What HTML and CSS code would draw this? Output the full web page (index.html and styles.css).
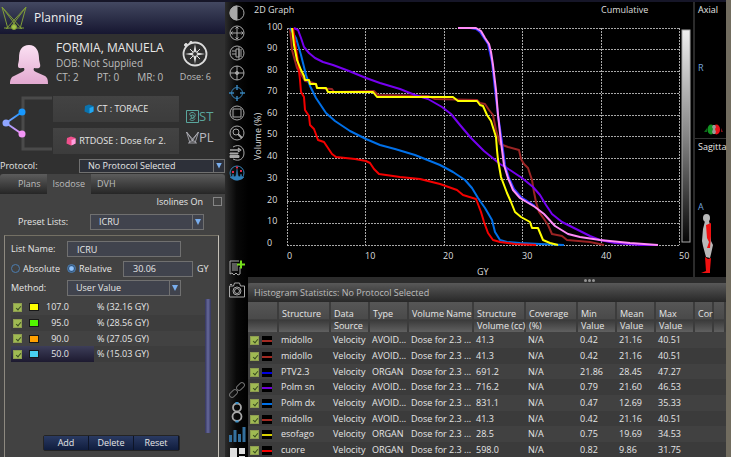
FILE: index.html
```html
<!DOCTYPE html>
<html lang="en">
<head>
<meta charset="utf-8">
<title>Planning</title>
<link rel="stylesheet" href="styles.css">
</head>
<body>
<div class="app">
  <aside class="sidebar">
    <header class="title">
      <svg class="logo" width="28" height="26" viewBox="0 0 28 26" fill="none" stroke="#7f9c38" stroke-width="1"><path d="M2 2 22 24M2 2 8 24M2 2 17 22M26 2 6 24M26 2 20 24M26 2 11 22M4 23h20"/><circle cx="14" cy="22" r="2.500" fill="#a4c44a"/></svg>
      <h1>Planning</h1>
    </header>
    <section class="patient">
      <svg class="avatar" width="40" height="41" viewBox="0 0 40 41"><defs><linearGradient id="skin" x1="0" y1="0" x2="0" y2="1"><stop offset="0" stop-color="#fbe0f3"/><stop offset="1" stop-color="#e2a9d0"/></linearGradient></defs><path fill="url(#skin)" d="M20 1C27 1 30 7 30 14c0 4 2 7 1 9-1 2-4 1-6 1-1 2 0 3 2 4l9 4c3 2 3 5 3 8H1c0-4 1-7 4-8l8-4c2-1 3-2 2-4-3 0-6 1-6-2 0-3 1-4 1-8C10 6 13 1 20 1Z"/></svg>
      <div class="details">
        <h2>FORMIA, MANUELA</h2>
        <p>DOB: Not Supplied</p>
        <p class="counts"><span>CT: 2</span><span>PT: 0</span><span>MR: 0</span></p>
      </div>
      <div class="dose">
        <svg width="28" height="28" viewBox="0 0 28 28" fill="none" stroke="#dcdcdc"><circle cx="14" cy="14" r="11.500" stroke-width="1.800"/><path stroke="none" fill="#e4e4e4" d="m14 4 1.600 8.400L24 14l-8.400 1.600L14 24l-1.600-8.400L4 14l8.400-1.600Z"/><path d="m9 9 10 10M19 9 9 19"/><circle cx="14" cy="14" r="2.500" fill="#333"/><circle cx="5" cy="5" r="1.500" fill="#dcdcdc"/><circle cx="10" cy="2.500" r="1.200" fill="#dcdcdc"/></svg>
        <span>Dose: 6</span>
      </div>
    </section>
    <section class="volumes">
      <svg width="53" height="60" viewBox="0 0 53 60" fill="none"><defs><linearGradient id="up" x1="0" y1="1" x2="1" y2="0"><stop stop-color="#8fa5ff"/><stop offset="1" stop-color="#1195ff"/></linearGradient><linearGradient id="down" x1="0" y1="0" x2="1" y2="1"><stop stop-color="#8fa5ff"/><stop offset="1" stop-color="#f08cf4"/></linearGradient></defs><path d="M52 3H23v51h29" stroke="#4a4a4a" stroke-width="3"/><path d="M6 28 22 17" stroke="url(#up)" stroke-width="2"/><path d="m6 28 16 11" stroke="url(#down)" stroke-width="2"/><circle cx="6" cy="28" r="3.500" fill="#8fa5ff"/><circle cx="22" cy="17" r="3.500" fill="#1798ff"/><circle cx="22" cy="39" r="3.500" fill="#f395f7"/></svg>
      <div class="volume-buttons">
        <button type="button"><svg width="10" height="10" viewBox="0 0 10 10"><path fill="#0a72ad" d="m1 2 4-1.500L9.500 2v5.500L5 9.500.5 7.500Z"/><path fill="#22a7f2" d="m5.500 4 4-1.500v5l-4 2Z"/></svg>CT : TORACE</button>
        <button type="button"><svg width="10" height="10" viewBox="0 0 10 10"><path fill="#f0508c" d="m1 2 4-1.500L9.500 2v5.500L5 9.500.5 7.500Z"/><path fill="#ffa0e0" d="m5.500 4 4-1.500v5l-4 2Z"/></svg>RTDOSE : Dose for 2.</button>
      </div>
      <div class="links">
        <a class="st" href="#st"><svg width="13" height="13" viewBox="0 0 13 13" fill="none" stroke="#5aa69d"><path d="M.5.500h12v12H.5Z"/><path d="M6 6C3 6 3 2.500 6 2.500s4 2 2.500 4.500S3.500 8 4 9.500s4 1.500 5-1"/><circle cx="6.500" cy="6.500" r="1.500"/></svg>ST</a>
        <a class="pl" href="#pl"><svg width="13" height="13" viewBox="0 0 13 13" fill="none" stroke="#b5b5bd" stroke-width=".8"><path d="m.5 1 9 10.500M.5 1 4 12M.5 1l7 10M12.500 1l-9 10.500M12.500 1 9 12M12.500 1l-7 10M2 12h9"/></svg>PL</a>
      </div>
    </section>
    <div class="protocol">
      <label for="protocol">Protocol:</label>
      <span class="select"><select id="protocol"><option>No Protocol Selected</option></select></span>
    </div>
    <nav class="tabs"><button type="button">Plans</button><button type="button" class="active">Isodose</button><button type="button">DVH</button></nav>
    <section class="isodose">
      <label class="isolines">Isolines On <input type="checkbox"></label>
      <div class="preset"><label for="preset">Preset Lists:</label><span class="select"><select id="preset"><option>ICRU</option></select></span></div>
      <div class="list">
        <div class="field"><label for="name">List Name:</label><input id="name" type="text" value="ICRU"></div>
        <div class="mode">
          <label><input type="radio" name="mode">Absolute</label>
          <label><input type="radio" name="mode" checked>Relative</label>
          <input class="amount" type="text" value="30.06" aria-label="Reference dose"><span>GY</span>
        </div>
        <div class="field"><label for="method">Method:</label><span class="select"><select id="method"><option>User Value</option></select></span></div>
        <div class="levels">
          <table>
            <tr><td><input class="tick" type="checkbox" checked aria-label="Show 107%"></td><td><i class="swatch yellow"></i></td><td class="value">107.0</td><td>% (32.16 GY)</td></tr>
            <tr><td><input class="tick" type="checkbox" checked aria-label="Show 95%"></td><td><i class="swatch green"></i></td><td class="value">95.0</td><td>% (28.56 GY)</td></tr>
            <tr><td><input class="tick" type="checkbox" checked aria-label="Show 90%"></td><td><i class="swatch orange"></i></td><td class="value">90.0</td><td>% (27.05 GY)</td></tr>
            <tr class="selected"><td><input class="tick" type="checkbox" checked aria-label="Show 50%"></td><td><i class="swatch cyan"></i></td><td class="value">50.0</td><td>% (15.03 GY)</td></tr>
          </table>
          <div class="scroll"></div>
        </div>
        <div class="actions"><button type="button">Add</button><button type="button">Delete</button><button type="button">Reset</button></div>
      </div>
    </section>
  </aside>

  <nav class="toolbar">
    <div class="tools">
      <button type="button" aria-label="Contrast"><svg viewBox="0 0 18 18"><circle cx="9" cy="9" r="7"/><path d="M9 2a7 7 0 0 0 0 14Z" fill="#a8a8a8"/></svg></button>
      <button type="button" aria-label="Pan"><svg viewBox="0 0 18 18"><circle cx="9" cy="9" r="7"/><path d="M9 3v12M3 9h12M7.500 4.500 9 3l1.500 1.500M7.500 13.500 9 15l1.500-1.500M4.500 7.500 3 9l1.500 1.500M13.500 7.500 15 9l-1.500 1.500"/></svg></button>
      <button type="button" aria-label="Scroll"><svg viewBox="0 0 18 18"><circle cx="9" cy="9" r="7"/><path d="M11 3v12M8 5h3v8H8M4 7h4M4 10h4M8 5v8M13 5v8"/></svg></button>
      <button type="button" aria-label="Center"><svg viewBox="0 0 18 18"><circle cx="9" cy="9" r="7"/><path d="M9 2v14M2 9h14"/><circle cx="9" cy="9" r="1.500" fill="#a8a8a8"/></svg></button>
      <button type="button" aria-label="Target" class="blue"><svg viewBox="0 0 18 18"><circle cx="9" cy="9" r="5.500"/><path d="M9 1v5M9 12v5M1 9h5M12 9h5" stroke-width="1.500"/></svg></button>
      <button type="button" aria-label="Frame"><svg viewBox="0 0 18 18"><circle cx="9" cy="9" r="7"/><path d="M5 5h8v8H5Z"/></svg></button>
      <button type="button" aria-label="Zoom"><svg viewBox="0 0 18 18"><circle cx="9" cy="9" r="7"/><circle cx="8" cy="8" r="3"/><path d="m10 10 4 4" stroke-width="2"/></svg></button>
      <button type="button" aria-label="Layers"><svg viewBox="0 0 18 18"><path d="M5 3C11-.5 16 3 16 9S11 18 5 15"/><path d="M2 6h9M10 4 12.500 6 10 8" stroke-width="1.500"/><path d="M2 9h8v1H2ZM2 11.500h9v2H2Z" fill="#a8a8a8"/></svg></button>
      <button type="button" aria-label="Histogram" class="blue"><svg viewBox="0 0 18 18"><circle cx="9" cy="9" r="7"/><path d="M2 13h2l1-3 1 3 2-1 1-7 1 7 2 1 1-3 1 3h2l-2 2-4 1H7l-4-2Z" fill="#2f7fb8" stroke-width=".5"/><path d="M5 7v2M9 2.500v2M13 6v2" stroke="#e02c4a" stroke-width="2"/></svg></button>
    </div>
    <div class="capture">
      <button type="button" aria-label="Add report"><svg viewBox="0 0 18 18"><path d="M2 2h9M2 2v13l2-1 2 2 2-2 2 2 2-1V8M4 5h5M4 7h6M4 9h6M4 11h6"/><path d="M13 1.500v8M9 5.500h8" stroke="#76e01c" stroke-width="2"/></svg></button>
      <button type="button" aria-label="Snapshot"><svg viewBox="0 0 18 18"><path d="M1.500 5h4l1-3h5l1 3h4v11h-15Z"/><circle cx="9" cy="10" r="4"/><circle cx="9" cy="10" r="2.500"/><path d="M2 3.500h2"/></svg></button>
    </div>
    <div class="modes">
      <button type="button" aria-label="Link"><svg viewBox="0 0 18 18" class="dim"><rect x="1" y="10" width="9" height="5" rx="2.500" transform="rotate(-45 5.500 12.500)"/><rect x="8" y="3" width="9" height="5" rx="2.500" transform="rotate(-45 12.500 5.500)"/></svg></button>
      <button type="button" aria-label="Registration" class="tall"><svg viewBox="0 0 18 22"><circle cx="9" cy="6.500" r="4" stroke-width="1.800"/><circle cx="9" cy="15.500" r="4.500" stroke-width="1.800"/><path d="M7.500 2h3M7.500 20.500h3" stroke="#3d94cc" stroke-width="2"/></svg></button>
      <button type="button" aria-label="Statistics"><svg viewBox="0 0 18 18"><path fill="#34709d" stroke="none" d="M1 10h3v7H1ZM5.500 5h3v12h-3ZM10 9h3v8h-3ZM14.500 2h3v15h-3Z"/></svg></button>
      <button type="button" aria-label="Layout"><svg viewBox="0 0 18 18"><path fill="#dedede" stroke="none" d="M2 3h7v14H2ZM11 3h6v6h-6ZM11 11h6v6h-6Z"/></svg></button>
    </div>
  </nav>

  <main class="main">
    <div class="views">
      <svg class="graph" viewBox="248 2 445 275" role="img" aria-label="Dose volume histogram">
        <defs><linearGradient id="ramp" x1="0" y1="0" x2="0" y2="1"><stop offset="0" stop-color="#f0f0f0"/><stop offset=".5" stop-color="#858585"/><stop offset="1" stop-color="#050505"/></linearGradient></defs>
        <path class="grid" d="M287 28.500h393M287 49.500h393M287 71.500h393M287 93.500h393M287 115.500h393M287 136.500h393M287 158.500h393M287 179.500h393M287 201.500h393M287 223.500h393M287 245.500h393M287.500 28v217M365.500 28v217M444.500 28v217M522.500 28v217M601.500 28v217M679.500 28v217"/>
        <g class="curves">
          <path stroke="#9a2424" d="M290 28 292 50 297 68 302 76 305 81 310 82 316 84 317 88 332 89 334 92 374 91 378 95 428 96 435 99 477 100 480 103 485 104 489 110 493 115 496 130 500 144 508 147 519 150 521 159 524 164 528 168 532 180 534 192 536 202 539 212 544 219 548 225 552 234 562 236 567 240 590 242 604 245"/>
          <path stroke="#7600f0" d="M294 28 298 30 301 38 304 47 309 53 315 58 323 62 333 65 349 71 366 78 380 83 400 89 415 95 428 99 442 107 451 114 460 125 471 138 484 151 500 164 510 170 522 178 533 187 540 195 546 205 552 214 562 222 578 230 590 236 600 240 615 243 640 245 658 245"/>
          <path stroke="#0070e8" d="M290 28 296 38 301 55 306 75 310 86 316 98 326 113 335 121 350 131 366 139 380 145 395 149 415 155 440 165 453 172 465 180 472 188 478 198 485 208 492 220 495 232 500 240 507 242 520 243 540 244 564 245"/>
          <path stroke="#f40000" d="M293 28 298 62 300 80 301 92 304 97 305 110 309 116 310 125 314 129 318 140 324 142 328 148 332 154 336 157 355 159 366 161 370 163 374 169 379 174 400 177 420 179 440 184 457 190 463 195 476 199 481 212 484 222 488 233 493 240 500 242 515 244 536 245"/>
          <path stroke="#ffff00" d="M292 28 294 45 297 60 299 65 301 70 304 76 305 80 309 80 310 84 316 84 317 88 326 88 328 92 373 92 377 97 453 97 458 101 477 101 480 105 483 106 487 115 491 121 496 137 497 150 498 160 501 177 507 193 511 202 515 212 521 217 530 222 532 228 538 228 543 240 550 243 558 245"/>
          <path stroke="#3030ff" d="M470 28 476 29 480 32 488 44 492 62 495 90 498 115 502 142 505 165 509 178 514 189 521 197 535 206"/>
          <path stroke="#ff8cf8" d="M458 28 476 28 481 31 485 38 489 44 491 52 493 65 496 90 498 115 501 142 504 165 508 178 513 190 520 198 535 207 544 214 555 226 568 234 580 237 600 240 630 243 658 245"/>
        </g>
        <rect x="682" y="30" width="8" height="212" fill="url(#ramp)" stroke="#aaa"/>
        <g class="axis">
          <text x="254" y="13">2D Graph</text><text x="601" y="13">Cumulative</text>
          <text x="267" y="30">100</text><text x="267" y="51">90</text><text x="267" y="73">80</text><text x="267" y="94">70</text><text x="267" y="116">60</text><text x="267" y="137">50</text><text x="267" y="159">40</text><text x="267" y="181">30</text><text x="267" y="203">20</text><text x="267" y="224">10</text><text x="267" y="246">0</text>
          <text x="287" y="259">0</text><text x="365" y="259">10</text><text x="443" y="259">20</text><text x="522" y="259">30</text><text x="601" y="259">40</text><text x="679" y="259">50</text>
          <text x="477" y="275">GY</text>
          <text transform="translate(261 160) rotate(-90)">Volume (%)</text>
        </g>
      </svg>
      <aside class="slices">
        <section class="axial"><h3>Axial</h3><p>R</p>
          <svg width="22" height="14" viewBox="0 0 22 14"><path d="M1 9l3-4v4Z" fill="#0b6a18"/><ellipse cx="8" cy="6.500" rx="3.500" ry="5" fill="#119422"/><ellipse cx="13.500" cy="6.500" rx="3.500" ry="5" fill="#e8121a"/><path d="M18 9V5l2 4Z" fill="#831218"/><path d="M10 2h2l1 2-1 2 1 3-1 2h-2l-1-2 1-3-1-2Z" fill="#999"/></svg></section>
        <section class="sagittal"><h3>Sagitta</h3><p>A</p>
          <svg width="12" height="62" viewBox="0 0 12 62"><ellipse cx="5.500" cy="5" rx="3.500" ry="4" fill="#b8b8b8"/><path fill="#b8b8b8" d="M4 8h4l1 4 1 16 2 4-2 9-1 4-4-1-3-11-1-5 1-12Z"/><path fill="#f01010" d="M5 12 10 10v13l-1 12H6l2-6-2-4Z"/><path fill="#f01010" d="m4 44 3 2 3-1-1 12v3H0l5-2Z"/></svg></section>
      </aside>
    </div>
    <div class="splitter"><i></i><i></i><i></i></div>
    <section class="stats">
      <h2>Histogram Statistics: No Protocol Selected</h2>
      <table>
        <colgroup><col class="w-mark"><col class="w-name"><col class="w-s"><col class="w-s"><col class="w-volume"><col class="w-name"><col class="w-name"><col class="w-s"><col class="w-s"><col class="w-s"><col class="w-cor"><col></colgroup>
        <thead><tr><th></th><th>Structure</th><th>Data<br>Source</th><th>Type</th><th>Volume Name</th><th>Structure<br>Volume (cc)</th><th>Coverage<br>(%)</th><th>Min<br>Value</th><th>Mean<br>Value</th><th>Max<br>Value</th><th>Cor</th><th></th></tr></thead>
        <tbody>
          <tr><td><input class="tick" type="checkbox" checked aria-label="Show midollo"><i class="line brown"></i></td><td>midollo</td><td>Velocity</td><td>AVOID...</td><td>Dose for 2.3 ...</td><td>41.3</td><td>N/A</td><td>0.42</td><td>21.16</td><td>40.51</td><td></td><td></td></tr>
          <tr><td><input class="tick" type="checkbox" checked aria-label="Show midollo"><i class="line brown"></i></td><td>midollo</td><td>Velocity</td><td>AVOID...</td><td>Dose for 2.3 ...</td><td>41.3</td><td>N/A</td><td>0.42</td><td>21.16</td><td>40.51</td><td></td><td></td></tr>
          <tr><td><input class="tick" type="checkbox" checked aria-label="Show PTV2.3"><i class="line navy"></i></td><td>PTV2.3</td><td>Velocity</td><td>ORGAN</td><td>Dose for 2.3 ...</td><td>691.2</td><td>N/A</td><td>21.86</td><td>28.45</td><td>47.27</td><td></td><td></td></tr>
          <tr><td><input class="tick" type="checkbox" checked aria-label="Show Polm sn"><i class="line purple"></i></td><td>Polm sn</td><td>Velocity</td><td>AVOID...</td><td>Dose for 2.3 ...</td><td>716.2</td><td>N/A</td><td>0.79</td><td>21.60</td><td>46.53</td><td></td><td></td></tr>
          <tr><td><input class="tick" type="checkbox" checked aria-label="Show Polm dx"><i class="line azure"></i></td><td>Polm dx</td><td>Velocity</td><td>AVOID...</td><td>Dose for 2.3 ...</td><td>831.1</td><td>N/A</td><td>0.47</td><td>12.69</td><td>35.33</td><td></td><td></td></tr>
          <tr><td><input class="tick" type="checkbox" checked aria-label="Show midollo"><i class="line brown"></i></td><td>midollo</td><td>Velocity</td><td>AVOID...</td><td>Dose for 2.3 ...</td><td>41.3</td><td>N/A</td><td>0.42</td><td>21.16</td><td>40.51</td><td></td><td></td></tr>
          <tr><td><input class="tick" type="checkbox" checked aria-label="Show esofago"><i class="line gold"></i></td><td>esofago</td><td>Velocity</td><td>ORGAN</td><td>Dose for 2.3 ...</td><td>28.5</td><td>N/A</td><td>0.75</td><td>19.69</td><td>34.53</td><td></td><td></td></tr>
          <tr><td><input class="tick" type="checkbox" checked aria-label="Show cuore"><i class="line red"></i></td><td>cuore</td><td>Velocity</td><td>ORGAN</td><td>Dose for 2.3 ...</td><td>598.0</td><td>N/A</td><td>0.82</td><td>9.86</td><td>31.75</td><td></td><td></td></tr>
        </tbody>
      </table>
    </section>
  </main>
</div>
</body>
</html>
```
FILE: styles.css
```css
* { box-sizing: border-box; }
body {
  margin: 0;
  background: #161628;
  color: #e6e6e6;
  font: 9px/12px "Open Sans", "Noto Sans", sans-serif;
  overflow: hidden;
}
h1, h2, h3, p { margin: 0; font-weight: 400; }
button, input, select { margin: 0; padding: 0; border: 0; background: none; color: inherit; font: inherit; }
svg { display: block; flex: none; }

.app {
  display: grid;
  grid-template-columns: 225px 23px minmax(0, 1fr);
  height: 100vh;
  padding-top: 2px;
  border-right: 5px solid #716c5f;
}

/* Sidebar */
.sidebar { display: flex; flex-direction: column; min-height: 0; background: #303030; }
.title {
  display: flex;
  align-items: center;
  gap: 6px;
  height: 32px;
  background: linear-gradient(#434861, #2c2f48 50%, #161630);
}
.title h1 { font-size: 12px; line-height: 20px; color: #f0f0f0; }
.patient { display: flex; padding: 6px 14px 0 9px; height: 60px; }
.details { flex: 1; margin-left: 7px; color: #bdbdbd; font-size: 10px; line-height: 14px; white-space: nowrap; }
.avatar { margin-top: 4px; }
.details h2 { font-size: 12px; line-height: 16px; color: #e8e8e8; }
.counts { display: flex; gap: 18px; }
.dose { display: flex; flex-direction: column; align-items: center; justify-content: space-between; height: 44px; color: #bdbdbd; white-space: nowrap; line-height: 14px; }
.volumes { display: flex; height: 62px; margin-top: 1px; }
.volume-buttons { display: flex; flex-direction: column; gap: 6px; width: 126px; margin-top: 1px; }
.volume-buttons button {
  display: flex;
  align-items: center;
  justify-content: center;
  gap: 3px;
  height: 26px;
  background: linear-gradient(#434343, #3c3c3c);
}
.links { margin: 11px 0 0 7px; font-size: 13px; line-height: 21px; }
.links a { display: flex; align-items: center; color: #b9b9c0; text-decoration: none; }
.links .st { color: #5aa69d; }

.select { position: relative; display: block; height: 16px; border: 1px solid #707070; background: #40434d; }
.select select { appearance: none; display: block; width: 100%; height: 100%; padding-left: 8px; outline: 0; }
.select::before { content: ""; position: absolute; right: 0; top: 0; bottom: 0; width: 10px; border-left: 1px solid #707070; pointer-events: none; }
.select::after { content: ""; position: absolute; right: 2px; top: 4px; width: 6px; height: 6px; background: #79aeef; clip-path: polygon(0 0, 100% 0, 50% 100%); pointer-events: none; }
.protocol { display: flex; align-items: center; justify-content: space-between; height: 17px; }
.protocol .select { width: 146px; height: 14px; background: #2d3039; }
.protocol .select::after { top: 3px; }

.tabs { display: flex; height: 20px; padding-left: 12px; border-radius: 3px 3px 0 0; background: linear-gradient(#5c5c5c, #262626); color: #bdbdbd; }
.tabs button { padding: 0 6px; }
.tabs .active { background: #424242; }
.isodose { flex: 1; display: flex; flex-direction: column; background: #424242; }
.isolines { display: flex; align-items: center; justify-content: flex-end; gap: 10px; height: 15px; margin-right: 3px; }
.isolines input { appearance: none; width: 9px; height: 9px; border: 1px solid #858585; }
.preset { display: flex; align-items: center; height: 26px; padding-left: 18px; }
.preset .select { width: 114px; margin-left: auto; margin-right: 21px; }
.list { flex: 1; margin: 0 6px 0 4px; padding: 5px 6px 0; border: 1px solid #8d8980; border-bottom: 0; border-top-color: #747064; border-right-color: #c5c1b8; }
.field { display: grid; grid-template-columns: 56px 114px; align-items: center; }
.field input, .amount { height: 16px; border: 1px solid #707070; background: #40434d; padding-left: 9px; }
.mode { display: flex; align-items: center; height: 23px; }
.mode label { display: flex; align-items: center; gap: 3px; width: 56px; }
.mode input[type="radio"] { appearance: none; width: 9px; height: 9px; border: 1px solid #4c7daf; border-radius: 50%; }
.mode input[type="radio"]:checked { background: radial-gradient(circle, #92c5ff 35%, #32547c 60%); }
.mode .amount { width: 70px; margin-right: 4px; }
.levels { display: flex; height: 134px; margin-top: 3px; }
table { border-spacing: 0; table-layout: fixed; }
td, th { padding: 0; font-weight: 400; }
.levels table { flex: 1; align-self: flex-start; }
.levels tr { height: 16px; }
.levels tr:nth-child(3) { height: 15px; }
.levels tr:nth-child(even) { background: #3d3d3d; }
.levels td:nth-child(-n+2) { width: 16px; }
.levels .value { width: 51px; padding-right: 25px; text-align: right; }
.levels td:last-child { padding-left: 3px; }
.levels .selected td:not(:last-child) { background: linear-gradient(#3d3e59, #1d1a30); }
.tick { appearance: none; position: relative; display: block; width: 9px; height: 9px; margin-left: 2px; background: #9fba52; border: 1px solid #8e9d50; }
.tick::after { content: ""; position: absolute; left: 3px; top: 1px; width: 2px; height: 4px; border: solid #3c4f22; border-width: 0 1px 1px 0; transform: rotate(40deg); }
.swatch { display: block; width: 10px; height: 8px; margin-left: 2px; border: 1px solid #181818; }
.yellow { background: #ffff00; }
.green { background: #52f500; }
.orange { background: #ffa000; }
.cyan { background: #48d0f0; }
.scroll { width: 6px; margin-right: 1px; background: linear-gradient(90deg, #34355c, #66699c 50%, #34355c); }
.actions { display: flex; width: 137px; margin: 2px auto 0 32px; border: 1px solid #242424; border-radius: 2px; }
.actions button { flex: 1; height: 14px; background: linear-gradient(#2a3a62, #101d3e); border-right: 1px solid #0e1527; line-height: 14px; }

/* Toolbar */
.toolbar { display: flex; flex-direction: column; min-height: 0; padding: 0 1px 0 3px; background: linear-gradient(90deg, #2b2b2b, #080808 50%, #000); }
.toolbar button { display: block; width: 18px; height: 18px; }
.toolbar .tall { height: 22px; }
.toolbar svg { width: 100%; height: 100%; fill: none; stroke: #a8a8a8; stroke-width: 1; }
.toolbar .blue svg { stroke: #3783b8; }
.toolbar .dim { stroke: #707070; }
.tools { display: grid; grid-auto-rows: 19px; row-gap: 1px; padding-top: 2px; }
.capture { display: grid; gap: 4px; margin-top: 76px; }
.modes { display: grid; gap: 2px; margin-top: auto; margin-bottom: -5px; }

/* Graph and slices */
.main { display: flex; flex-direction: column; min-width: 0; background: #000; }
.views { display: grid; grid-template-columns: minmax(0, 1fr) 33px; }
.graph { width: 100%; }
.grid { fill: none; stroke: #a8a8a8; stroke-width: 1; stroke-dasharray: 2 1; }
.curves { fill: none; stroke-width: 2; stroke-linejoin: round; }
.axis { fill: #dedede; font-size: 9px; }
.slices { display: flex; flex-direction: column; border-left: 2px solid #2b2b2b; }
.slices h3 { padding: 2px 0 0 3px; font-size: 9px; line-height: 12px; }
.slices p { padding-left: 3px; color: #72a4dc; }
.axial { height: 137px; border-bottom: 1px solid #333; }
.axial p { margin-top: 46px; }
.axial svg { margin: 49px 0 0 8px; }
.sagittal p { margin-top: 48px; }
.sagittal svg { margin: 0 0 0 6px; }
.splitter { display: flex; justify-content: center; align-items: center; gap: 1px; height: 6px; padding-left: 205px; background: #2c2c2c; }
.splitter i { width: 3px; height: 3px; border-radius: 50%; background: #929292; }

/* Statistics */
.stats { flex: 1; min-height: 0; overflow: hidden; background: #414141; }
.stats h2 { height: 19px; padding-left: 6px; font-size: 9px; line-height: 20px; color: #bdbdbd; border-radius: 3px 0 0; background: linear-gradient(#585858, #282828); }
.stats table { width: 100%; }
.stats th { height: 30px; padding: 6px 0 0 3px; text-align: left; vertical-align: top; background: linear-gradient(#565656, #4a4a4a 55%, #3a3a3a 60%, #606060); border-right: 2px solid #3c3c3c; white-space: nowrap; }
.stats td { height: 16px; padding-left: 2px; white-space: nowrap; }
.stats tbody tr:nth-child(3n) td { height: 15px; }
.stats tbody tr:nth-child(even) { background: #3b3b3b; }
.stats td:first-child .tick { display: inline-block; margin-left: 0; vertical-align: middle; }
.line { display: inline-block; width: 10px; height: 9px; margin-left: 3px; border: solid #000; border-width: 4px 0 3px; vertical-align: middle; }
.brown { background: #a22a22; }
.navy { background: #0000e0; }
.purple { background: #7000d8; }
.azure { background: #0070e8; }
.gold { background: #d8d000; }
.red { background: #f00000; }
.w-mark { width: 31px; }
.w-name { width: 52px; }
.w-s { width: 39px; }
.w-volume { width: 65px; }
.w-cor { width: 19px; }
```
